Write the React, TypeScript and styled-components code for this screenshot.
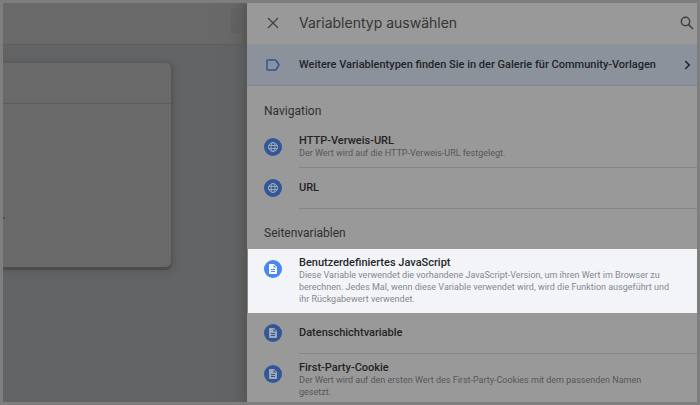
import React from "react";
import styled, { createGlobalStyle, css } from "styled-components";

const GlobalStyle = createGlobalStyle`
  *, *::before, *::after { box-sizing: border-box; }
  body { margin: 0; font-family: Roboto, "Liberation Sans", sans-serif; }
  button { font: inherit; color: inherit; background: none; border: 0; padding: 0; margin: 0; text-align: left; cursor: pointer; }
  h1, h2, p, ul { margin: 0; padding: 0; font-weight: 400; }
  svg { display: block; }
`;

const Frame = styled.div`
  height: 100vh;
  border: 3px solid #7e7e7e;
  display: grid;
  grid-template-columns: minmax(0, 244fr) minmax(0, 450fr);
  overflow: hidden;
  background: #636466;
`;

const Workspace = styled.div`
  display: flex;
  flex-direction: column;
  min-width: 0;
`;

const WorkspaceBar = styled.div`
  height: 42px;
  flex: none;
  display: flex;
  justify-content: flex-end;
  align-items: center;
  padding-bottom: 6px;
  background: #696969;
  border-bottom: 1px solid #5f5f5f;
`;

const BarControl = styled.div`
  width: 16px;
  height: 25px;
  border-radius: 3px 0 0 3px;
  background: #636464;
`;

const Card = styled.section`
  margin: 18px 76px 0 0;
  height: 204px;
  background: #696969;
  border-radius: 0 5px 5px 0;
  box-shadow: 0 3px 1px #4b4b50, 1px 1px 3px 1px #555556, 0 2px 6px 6px #60605f;
`;

const CardHeader = styled.div`
  height: 41px;
  border-bottom: 1px solid #5c5c5c;
`;

const CardBody = styled.div`
  padding-top: 113px;
`;

const Mark = styled.div`
  width: 2px;
  height: 2px;
  background: #505050;
`;

const Drawer = styled.aside`
  display: flex;
  flex-direction: column;
  min-width: 0;
  overflow: visible;
  background: #999999;
  box-shadow: -3px 0 5px #575755, -4px 0 18px 2px #5a5b59;
`;

const DrawerHeader = styled.header`
  height: 42px;
  flex: none;
  display: flex;
  align-items: center;
  gap: 16px;
  padding: 0 0 2px 16px;
  border-bottom: 1px solid #91949a;
`;

const IconButton = styled.button`
  width: 20px;
  height: 20px;
  flex: none;
  display: flex;
  align-items: center;
  justify-content: center;
`;

const Title = styled.h1`
  flex: 1;
  font-family: Inter, Roboto, sans-serif;
  font-size: 14px;
  line-height: 20px;
  color: #343536;
`;

const Banner = styled.button`
  height: 41px;
  flex: none;
  display: flex;
  align-items: center;
  gap: 16px;
  padding-left: 16px;
  background: #8c929c;
  border-bottom: 1px solid #82868d;
`;

const BannerIcon = styled.span`
  width: 20px;
  flex: none;
  display: flex;
  justify-content: center;
`;

const BannerText = styled.span`
  flex: 1;
  font-size: 11px;
  font-weight: 500;
  line-height: 14px;
  color: #222428;
`;

const Types = styled.div`
  padding-top: 1px;
  min-height: 0;
  overflow: hidden;
`;

const SectionTitle = styled.h2`
  height: 40px;
  padding: 16px 17px 0;
  font-size: 12px;
  line-height: 16px;
  color: #2f3032;
`;

const List = styled.ul`
  list-style: none;
`;

const Row = styled.button<{ $active?: boolean }>`
  width: 100%;
  display: flex;
  align-items: stretch;
  gap: 17px;
  padding-left: 17px;
  color: #232427;
  --detail: #56585b;
  --badge: #2f5799;
  --glyph: #a3a8b0;
  --line: #85888b;
  ${(p) =>
    p.$active &&
    css`
      background: #f2f4f7;
      color: #26282c;
      --detail: #85888d;
      --badge: #4688f1;
      --glyph: #ffffff;
      border-left: 1px solid #85878a;
      padding-left: 16px;
    `}
`;

const Badge = styled.span`
  width: 18px;
  height: 18px;
  flex: none;
  margin-top: 11px;
  border-radius: 50%;
  display: flex;
  align-items: center;
  justify-content: center;
  background: var(--badge);
  color: var(--glyph);
`;

const RowBody = styled.span`
  flex: 1;
  min-width: 0;
  min-height: 41px;
  padding: 8px 24px 8px 0;
  display: flex;
  flex-direction: column;
  justify-content: center;
  border-bottom: 1px solid var(--line);
`;

const ActiveBody = styled(RowBody)`
  border-bottom: 0;
`;

const Name = styled.span`
  font-size: 11px;
  font-weight: 500;
  line-height: 12px;
`;

const Detail = styled.span`
  font-size: 9px;
  line-height: 12px;
  color: var(--detail);
`;

const Globe = () => (
  <svg width="12" height="12" viewBox="0 0 24 24" fill="none" stroke="currentColor" strokeWidth="2">
    <circle cx="12" cy="12" r="9" />
    <ellipse cx="12" cy="12" rx="4" ry="9" />
    <path d="M3.5 9h17M3.5 15h17" />
  </svg>
);

const Doc = () => (
  <svg width="12" height="12" viewBox="0 0 24 24" fill="currentColor">
    <path d="M14 2H6c-1.100 0-2 .9-2 2v16c0 1.100.9 2 2 2h12c1.100 0 2-.9 2-2V8l-6-6zm2 16H8v-2h8v2zm0-4H8v-2h8v2zm-3-5V3.500L18.500 9H13z" />
  </svg>
);

type VariableType = { name: string; detail?: string; icon: "globe" | "doc"; active?: boolean };

const sections: { title: string; items: VariableType[] }[] = [
  {
    title: "Navigation",
    items: [
      { name: "HTTP-Verweis-URL", detail: "Der Wert wird auf die HTTP-Verweis-URL festgelegt.", icon: "globe" },
      { name: "URL", icon: "globe" },
    ],
  },
  {
    title: "Seitenvariablen",
    items: [
      {
        name: "Benutzerdefiniertes JavaScript",
        detail:
          "Diese Variable verwendet die vorhandene JavaScript-Version, um ihren Wert im Browser zu berechnen. Jedes Mal, wenn diese Variable verwendet wird, wird die Funktion ausgeführt und ihr Rückgabewert verwendet.",
        icon: "doc",
        active: true,
      },
      { name: "Datenschichtvariable", icon: "doc" },
      {
        name: "First-Party-Cookie",
        detail: "Der Wert wird auf den ersten Wert des First-Party-Cookies mit dem passenden Namen gesetzt.",
        icon: "doc",
      },
    ],
  },
];

export default function App() {
  return (
    <>
      <GlobalStyle />
      <Frame>
        <Workspace>
          <WorkspaceBar>
            <BarControl />
          </WorkspaceBar>
          <Card>
            <CardHeader />
            <CardBody>
              <Mark />
            </CardBody>
          </Card>
        </Workspace>
        <Drawer>
          <DrawerHeader>
            <IconButton aria-label="Schließen">
              <svg width="12" height="12" viewBox="0 0 12 12" fill="none" stroke="#3f4144" strokeWidth="1.200">
                <path d="M1 1l10 10M11 1L1 11" />
              </svg>
            </IconButton>
            <Title>Variablentyp auswählen</Title>
            <IconButton aria-label="Suchen">
              <svg width="14" height="14" viewBox="0 0 14 14" fill="none" stroke="#3f4144" strokeWidth="1.500">
                <circle cx="5.500" cy="5.500" r="4.200" />
                <path d="M8.600 8.600L13 13" />
              </svg>
            </IconButton>
          </DrawerHeader>
          <Banner>
            <BannerIcon>
              <svg width="14" height="12" viewBox="0 0 14 12" fill="none" stroke="#2a5596" strokeWidth="1.500" strokeLinejoin="round">
                <path d="M1.800 1h7.400c.4 0 .7.200.9.500L13 6l-2.900 4.500c-.2.300-.5.500-.9.500H1.800c-.5 0-.8-.3-.8-.8V1.800C1 1.300 1.300 1 1.800 1z" />
              </svg>
            </BannerIcon>
            <BannerText>Weitere Variablentypen finden Sie in der Galerie für Community-Vorlagen</BannerText>
            <BannerIcon>
              <svg width="7" height="10" viewBox="0 0 7 10" fill="none" stroke="#242629" strokeWidth="1.600">
                <path d="M1.200 1l4 4-4 4" />
              </svg>
            </BannerIcon>
          </Banner>
          <Types>
            {sections.map((section) => (
              <section key={section.title}>
                <SectionTitle>{section.title}</SectionTitle>
                <List>
                  {section.items.map((item) => {
                    const Body = item.active ? ActiveBody : RowBody;
                    return (
                      <li key={item.name}>
                        <Row $active={item.active}>
                          <Badge>{item.icon === "globe" ? <Globe /> : <Doc />}</Badge>
                          <Body>
                            <Name>{item.name}</Name>
                            {item.detail && <Detail>{item.detail}</Detail>}
                          </Body>
                        </Row>
                      </li>
                    );
                  })}
                </List>
              </section>
            ))}
          </Types>
        </Drawer>
      </Frame>
    </>
  );
}
